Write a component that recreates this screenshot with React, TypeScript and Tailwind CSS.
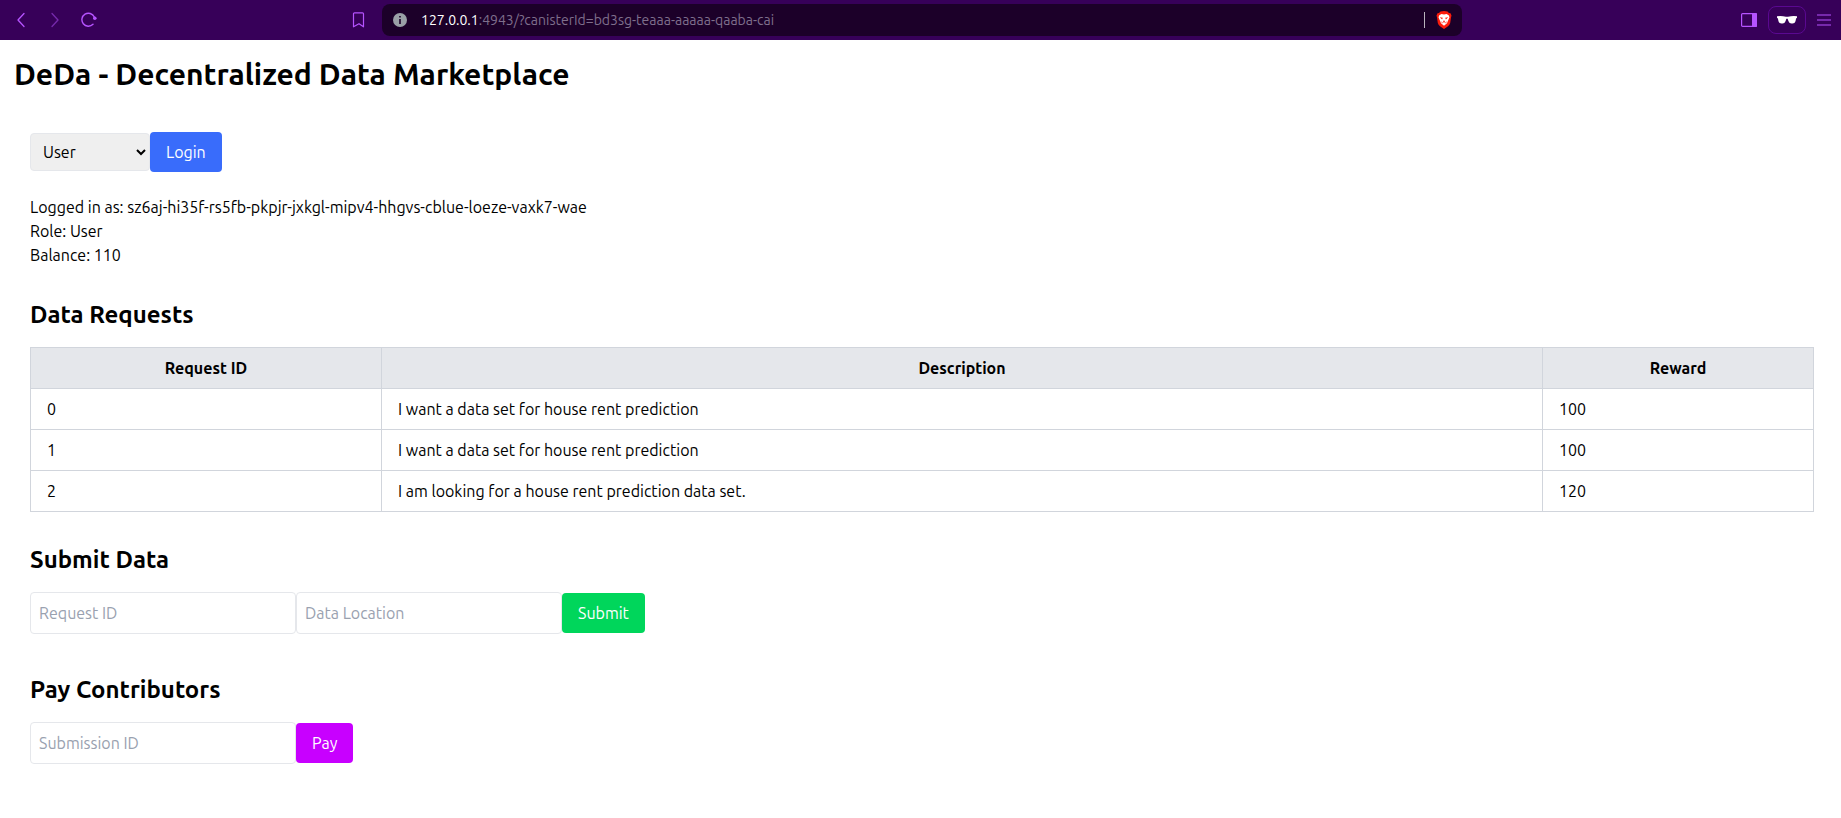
import { useState } from 'react';

interface DataRequest { id: number; description: string; reward: number }

const REQUESTS: DataRequest[] = [
  { id: 0, description: 'I want a data set for house rent prediction', reward: 100 },
  { id: 1, description: 'I want a data set for house rent prediction', reward: 100 },
  { id: 2, description: 'I am looking for a house rent prediction data set.', reward: 120 },
];

function BrowserBar() {
  return (
    <header className="flex h-10 items-center bg-[#370059] text-[#b653ff]">
      <div className="flex flex-1 items-center pl-[13px]">
        <button type="button" aria-label="Back" className="p-1">
          <svg width="14" height="16" viewBox="0 0 14 16" fill="none" stroke="currentColor" strokeWidth="1.3" strokeLinecap="round" strokeLinejoin="round"><path d="M7 1.500 1 8l6 6.500" /></svg>
        </button>
        <button type="button" aria-label="Forward" className="ml-3 p-1 opacity-50">
          <svg width="14" height="16" viewBox="0 0 14 16" fill="none" stroke="currentColor" strokeWidth="1.3" strokeLinecap="round" strokeLinejoin="round"><path d="M1 1.500 7 8l-6 6.500" /></svg>
        </button>
        <button type="button" aria-label="Reload" className="ml-2 p-1">
          <svg width="16" height="16" viewBox="0 0 16 16" fill="none" stroke="currentColor" strokeWidth="1.4" strokeLinecap="round"><path d="M13.300 5A6.500 6.500 0 1 0 12 12.300" /><circle cx="13.800" cy="6.200" r="1.800" fill="currentColor" stroke="none" /></svg>
        </button>
        <button type="button" aria-label="Bookmark" className="mr-3 ml-auto p-1">
          <svg width="14" height="16" viewBox="0 0 14 16" fill="none" stroke="currentColor" strokeWidth="1.2" strokeLinejoin="round"><path d="M2.500.8h8q1 0 1 1v13L7 11.700l-5.500 3.100v-13q0-1 1-1z" /></svg>
        </button>
      </div>
      <div className="flex h-8 w-[1080px] items-center rounded-lg bg-[#1c0029] pr-2.5 pl-[11px]">
        <svg width="14" height="14" viewBox="0 0 14 14"><circle cx="7" cy="7" r="7" fill="#9aa0a6" /><path d="M6.200 3h1.600v1.600H6.200zM6.200 6h1.600v5H6.200z" fill="#1c0029" /></svg>
        <p className="ml-3.5 pb-px text-sm text-[#7f6f8c]"><span className="text-white">127.0.0.1</span>:4943/?canisterId=bd3sg-teaaa-aaaaa-qaaba-cai</p>
        <span className="mr-[11px] ml-auto h-4 w-px bg-[#b9b3bd]" />
        <svg width="16" height="18" viewBox="0 0 16 18">
          <path d="M4.500.5Q8-.5 11.500.5L13 2l1.500.3 1 2.200-.5 2-.8 5.500q-.5 2-2.200 3.200L8 18l-4-2.800Q2.300 14 1.800 12L1 6.500l-.5-2 1-2.200L3 2z" fill="#fb1c0c" />
          <path d="M3.300 4.200 5.500 3 8 3.500 10.500 3l2.200 1.200.8 2-1.700 4-.8 2L8 14.800l-3-2.600-.8-2-1.700-4z" fill="#fff" />
          <path d="m3.800 6.300 3 .5-.7 1.600zM12.200 6.300l-3 .5.7 1.600zM8 9l1 2-1 .8-1-.8zM5.300 10.300l1.500 1.500-.8.6zM10.700 10.300l-1.500 1.500.8.6z" fill="#fb1c0c" />
        </svg>
      </div>
      <div className="flex flex-1 items-center justify-end pr-2.5">
        <button type="button" aria-label="Sidebar">
          <svg width="16" height="14" viewBox="0 0 16 14"><rect x=".6" y=".6" width="14.800" height="12.800" rx="1" fill="none" stroke="currentColor" strokeWidth="1.200" /><path d="M11 0h4q1 0 1 1v12q0 1-1 1h-4z" fill="currentColor" /></svg>
        </button>
        <button type="button" aria-label="Private profile" className="ml-[11px] flex h-7 w-[38px] items-center justify-center rounded-lg border border-[#5a0891] text-white">
          <svg width="20" height="8" viewBox="0 0 20 8" fill="currentColor"><path d="M0 .3Q4.500-.3 9 .8h2Q15.500-.3 20 .3v1.500l-.9.6-.6 2.800q-.6 2.200-3 2.200h-1q-2.200 0-3-2.200l-.9-2.500h-1.200l-.9 2.500q-.8 2.200-3 2.200h-1q-2.400 0-3-2.200L.9 2.400 0 1.800z" /></svg>
        </button>
        <button type="button" aria-label="Menu" className="ml-[11px]">
          <svg width="14" height="12" viewBox="0 0 14 12" stroke="currentColor" strokeWidth="1.200"><path d="M0 1h14M0 6h14M0 11h14" /></svg>
        </button>
      </div>
    </header>
  );
}

export default function App() {
  const [role, setRole] = useState('User');

  return (
    <div className="min-h-screen bg-white font-['Ubuntu','Noto_Sans',sans-serif] text-base text-black">
      <BrowserBar />
      <main className="pt-4 pr-[11px] pb-4 pl-[14px]">
        <h1 className="text-3xl font-bold">DeDa - Decentralized Data Marketplace</h1>

        <div className="px-4 pt-10">
          <div className="flex items-center">
            <select aria-label="Role" value={role} onChange={e => setRole(e.target.value)} className="h-[38px] w-[120px] rounded-sm border border-gray-200 bg-[#efefef] px-2">
              <option>User</option>
              <option>Contributor</option>
            </select>
            <button type="button" className="rounded-sm bg-[#396cfb] px-4 py-2 text-white">Login</button>
          </div>
          <div className="mt-[23px]">
            <p>Logged in as: sz6aj-hi35f-rs5fb-pkpjr-jxkgl-mipv4-hhgvs-cblue-loeze-vaxk7-wae</p>
            <p>Role: User</p>
            <p>Balance: 110</p>
          </div>
        </div>

        <section className="px-4 pt-8">
          <h2 className="mb-4 text-2xl font-bold">Data Requests</h2>
          <table className="w-full table-fixed border-collapse border border-gray-300">
            <thead>
              <tr className="bg-gray-200">
                <th className="w-[351px] border border-gray-300 px-4 py-2">Request ID</th>
                <th className="border border-gray-300 px-4 py-2">Description</th>
                <th className="w-[271px] border border-gray-300 px-4 py-2">Reward</th>
              </tr>
            </thead>
            <tbody>
              {REQUESTS.map(r => (
                <tr key={r.id}>
                  <td className="border border-gray-300 px-4 py-2">{r.id}</td>
                  <td className="border border-gray-300 px-4 py-2">{r.description}</td>
                  <td className="border border-gray-300 px-4 py-2">{r.reward}</td>
                </tr>
              ))}
            </tbody>
          </table>
        </section>

        <section className="px-4 pt-8">
          <h2 className="mb-4 text-2xl font-bold">Submit Data</h2>
          <form className="flex items-center" onSubmit={e => e.preventDefault()}>
            <input type="text" aria-label="Request ID" placeholder="Request ID" className="w-[266px] rounded-sm border border-gray-200 p-2 placeholder:text-gray-400" />
            <input type="text" aria-label="Data Location" placeholder="Data Location" className="w-[266px] rounded-sm border border-gray-200 p-2 placeholder:text-gray-400" />
            <button type="submit" className="rounded-sm bg-[#00d65b] px-4 py-2 text-white">Submit</button>
          </form>
        </section>

        <section className="px-4 pt-10">
          <h2 className="mb-4 text-2xl font-bold">Pay Contributors</h2>
          <form className="flex items-center" onSubmit={e => e.preventDefault()}>
            <input type="text" aria-label="Submission ID" placeholder="Submission ID" className="w-[266px] rounded-sm border border-gray-200 p-2 placeholder:text-gray-400" />
            <button type="submit" className="rounded-sm bg-[#c800ff] px-4 py-2 text-white">Pay</button>
          </form>
        </section>
      </main>
    </div>
  );
}
